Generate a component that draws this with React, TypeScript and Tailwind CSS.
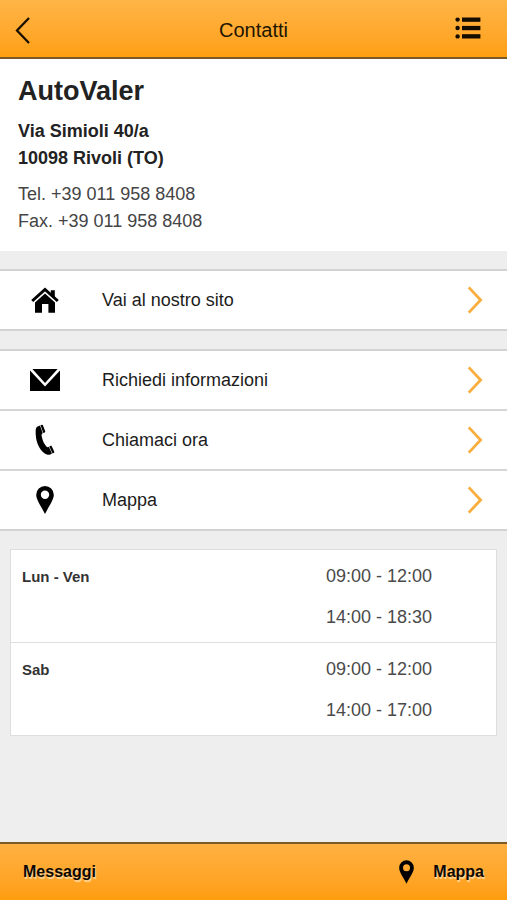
import type { ReactNode } from 'react';

type IconProps = { className?: string };

type ContactAction = {
  label: string;
  href: string;
  icon: ReactNode;
};

type OpeningHours = {
  day: string;
  slots: string[];
};

const BackIcon = () => (
  <svg viewBox="0 0 16 28" className="h-7 w-4" fill="none" stroke="#1a1000" strokeWidth="2.3" aria-hidden="true">
    <path d="M14 2 L2 14.5 L14 27" />
  </svg>
);

const MenuIcon = () => (
  <svg viewBox="0 0 26 22" className="h-[22px] w-[26px]" fill="#140c00" aria-hidden="true">
    <circle cx="2.6" cy="2.6" r="2.2" />
    <circle cx="2.6" cy="11" r="2.2" />
    <circle cx="2.6" cy="19.4" r="2.2" />
    <rect x="7" y="0.5" width="18.4" height="4.3" />
    <rect x="7" y="8.9" width="18.4" height="4.3" />
    <rect x="7" y="17.2" width="18.4" height="4.3" />
  </svg>
);

const HomeIcon = () => (
  <svg viewBox="0 0 28 26" className="h-[26px] w-7" aria-hidden="true">
    <path d="M19.8 3.2h4v7.4l-4-3.6z" />
    <path d="M1.2 14 L14 2.4 L26.8 14" fill="none" stroke="#000" strokeWidth="3" />
    <path d="M14 6.6 L24 15.4 V25.8 H17.4 V17 H11 V25.8 H4 V15.4 Z" />
  </svg>
);

const MailIcon = () => (
  <svg viewBox="0 0 30 22" className="h-[22px] w-[30px]" aria-hidden="true">
    <path d="M2.4 0 H27.6 L15 14 Z" />
    <path d="M0 1.4 L15 17.4 L30 1.4 V22 H0 Z" />
  </svg>
);

const PhoneIcon = () => (
  <svg viewBox="0 0 20 32" className="h-8 w-5" aria-hidden="true">
    <path d="M2 2.8 L5 1.6 L7.8 9.3 C6.4 10 6.4 11 6.8 12.8 C7.6 16.8 9.2 20 11.2 22.2 C12.1 23.2 12.8 23.4 13.8 22.8 L17 29.6 L15.2 30.6 C13.4 31.2 11.2 30.6 8.8 28.7 C4.3 25 1.2 18.4 0.8 11.2 C0.5 7 0.5 4 2 2.8 Z" />
    <path d="M5.5 1.3 L7 0.8 C7.4 0.7 7.7 0.9 7.9 1.3 L10.2 7.2 C10.4 7.7 10.2 8.1 9.7 8.4 L8.3 9 Z" />
    <path d="M14.3 22.6 L15.6 21.8 C16.1 21.6 16.4 21.7 16.7 22.2 L19.2 27.5 C19.5 28 19.4 28.4 19 28.7 L17.6 29.4 Z" />
  </svg>
);

const PinIcon = ({ className }: IconProps) => (
  <svg viewBox="0 0 18 28" className={className} aria-hidden="true">
    <path
      fillRule="evenodd"
      d="M9 0 A8.8 8.8 0 0 0 0.2 8.8 C0.2 14 5.2 20.2 9 28 C12.8 20.2 17.8 14 17.8 8.8 A8.8 8.8 0 0 0 9 0 Z M9 4.6 A4.2 4.2 0 1 1 9 13 A4.2 4.2 0 1 1 9 4.6 Z"
    />
  </svg>
);

const ArrowIcon = () => (
  <svg viewBox="0 0 16 28" className="h-7 w-4" fill="none" stroke="#f8ad3c" strokeWidth="2.8" aria-hidden="true">
    <path d="M1.8 1.4 L13.6 14 L1.8 26.6" />
  </svg>
);

const siteActions: ContactAction[] = [{ label: 'Vai al nostro sito', href: '#sito', icon: <HomeIcon /> }];

const contactActions: ContactAction[] = [
  { label: 'Richiedi informazioni', href: '#informazioni', icon: <MailIcon /> },
  { label: 'Chiamaci ora', href: 'tel:+390119588408', icon: <PhoneIcon /> },
  { label: 'Mappa', href: '#mappa', icon: <PinIcon className="h-7 w-[18px]" /> },
];

const openingHours: OpeningHours[] = [
  { day: 'Lun - Ven', slots: ['09:00 - 12:00', '14:00 - 18:30'] },
  { day: 'Sab', slots: ['09:00 - 12:00', '14:00 - 17:00'] },
];

const ActionList = ({ actions }: { actions: ContactAction[] }) => (
  <ul className="divide-y-2 divide-[#d6d6d6] border-y-2 border-[#d2d2d2] bg-white">
    {actions.map((action) => (
      <li key={action.label}>
        <a href={action.href} className="flex h-[58px] items-center pr-6 text-lg text-[#1c1c1c]">
          <span className="flex w-[90px] justify-center">{action.icon}</span>
          <span className="flex-1 pl-3">{action.label}</span>
          <ArrowIcon />
        </a>
      </li>
    ))}
  </ul>
);

export default function App() {
  return (
    <div className="flex min-h-screen flex-col bg-[#eeeeee] font-['Liberation_Sans',Arial,sans-serif]">
      <header className="grid h-[59px] grid-cols-[1fr_auto_1fr] items-center border-b-2 border-[#7b5a25] bg-linear-to-b from-[#ffb545] to-[#ff9f10] pt-[3px]">
        <button type="button" aria-label="Indietro" className="justify-self-start pl-[15px]">
          <BackIcon />
        </button>
        <h1 className="text-xl text-[#221500]">Contatti</h1>
        <button type="button" aria-label="Menu" className="justify-self-end pr-[26px] pb-1">
          <MenuIcon />
        </button>
      </header>

      <main className="flex-1">
        <section className="bg-white px-[18px] py-4 text-lg leading-[27px] text-[#444]">
          <h2 className="text-[27px] leading-8 font-bold text-[#222]">AutoValer</h2>
          <p className="mt-[11px] font-bold text-[#222]">
            Via Simioli 40/a
            <br />
            10098 Rivoli (TO)
          </p>
          <p className="mt-[9px]">
            Tel. +39 011 958 8408
            <br />
            Fax. +39 011 958 8408
          </p>
        </section>

        <nav className="flex flex-col gap-[18px] py-[18px]">
          <ActionList actions={siteActions} />
          <ActionList actions={contactActions} />
        </nav>

        <div className="mx-[10px] border border-[#dedede] bg-white">
          <table className="w-full">
            <tbody className="divide-y divide-[#dedede]">
              {openingHours.map(({ day, slots }) => (
                <tr key={day} className="align-top">
                  <th scope="row" className="px-[11px] pt-[17px] text-left text-[15px] leading-5 font-bold text-[#333]">
                    {day}
                  </th>
                  <td className="w-[170px] pt-[6px] pb-1 text-lg leading-[41px] text-[#4a4a4a]">
                    {slots.map((slot) => (
                      <div key={slot}>{slot}</div>
                    ))}
                  </td>
                </tr>
              ))}
            </tbody>
          </table>
        </div>
      </main>

      <footer className="flex h-[58px] items-center justify-between border-t-2 border-[#7b5a25] bg-linear-to-b from-[#ffb141] to-[#ff9d0c] px-[23px] font-bold text-[#0d0800]">
        <a href="#messaggi" className="text-shadow-[1px_2px_1px_#ffd9a0]">
          Messaggi
        </a>
        <a href="#mappa" className="flex items-center gap-[19px] text-shadow-[1px_2px_1px_#ffd9a0]">
          <PinIcon className="h-6 w-[15px]" />
          Mappa
        </a>
      </footer>
    </div>
  );
}
